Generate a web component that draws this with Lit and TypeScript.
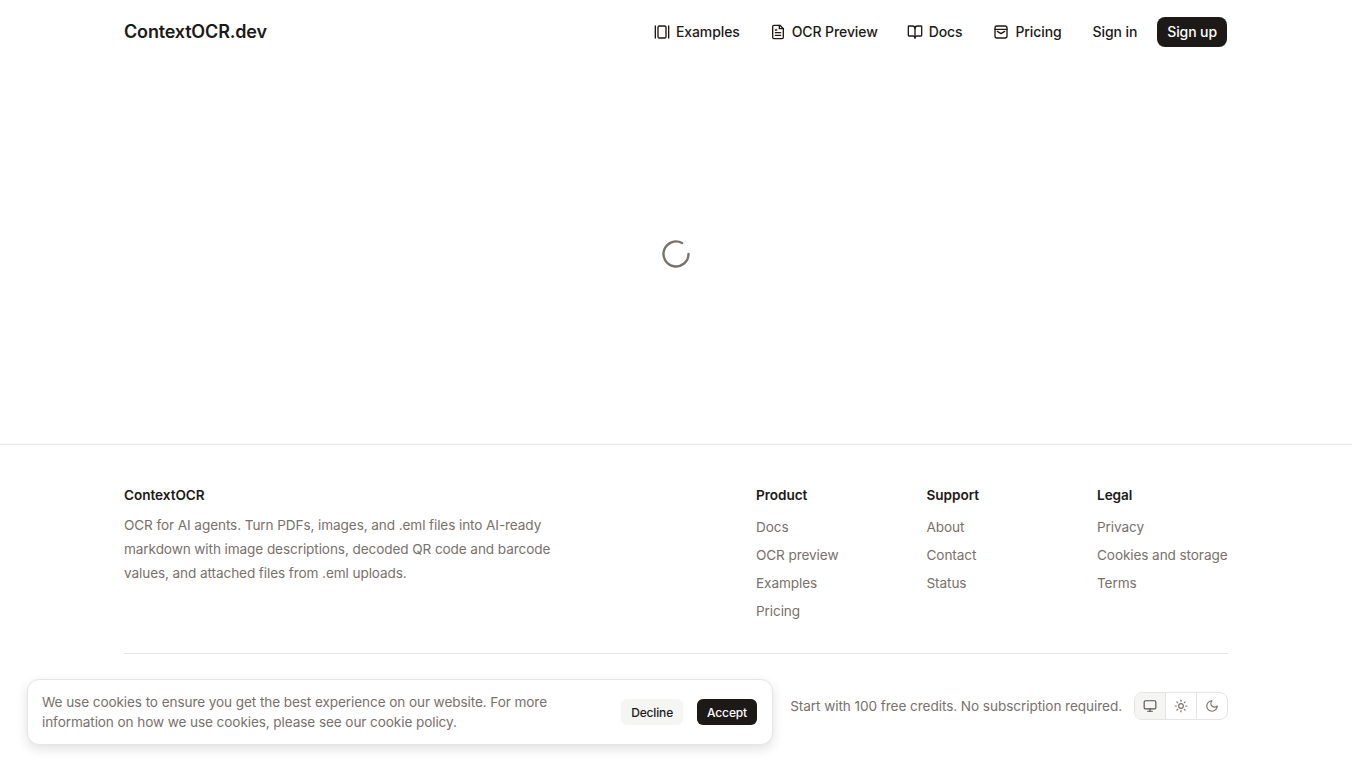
import { LitElement, css, html, svg as s } from 'lit';
import { customElement } from 'lit/decorators.js';

const svg = (body: unknown, size = 16) => html`<svg
  width=${size}
  height=${size}
  viewBox="0 0 24 24"
  fill="none"
  stroke="currentColor"
  stroke-width="2"
  stroke-linecap="round"
  stroke-linejoin="round"
>
  ${body}
</svg>`;

const icons = {
  examples: s`<rect x="6" y="3" width="12" height="18" rx="2"/><path d="M2 3v18"/><path d="M22 3v18"/>`,
  file: s`<path d="M15 2H6a2 2 0 0 0-2 2v16a2 2 0 0 0 2 2h12a2 2 0 0 0 2-2V7z"/><path d="M14 2v5h6"/><path d="M10 9H8"/><path d="M16 13H8"/><path d="M16 17H8"/>`,
  book: s`<path d="M12 7v14"/><path d="M3 18a1 1 0 0 1-1-1V4a1 1 0 0 1 1-1h5a4 4 0 0 1 4 4 4 4 0 0 1 4-4h5a1 1 0 0 1 1 1v13a1 1 0 0 1-1 1h-6a3 3 0 0 0-3 3 3 3 0 0 0-3-3z"/>`,
  pricing: s`<rect x="3" y="3" width="18" height="18" rx="3"/><path d="M3 8h18"/><path d="M6.5 11l5.5 3.5 5.5-3.5"/>`,
  monitor: s`<rect x="2" y="3" width="20" height="14" rx="2"/><path d="M8 21h8"/><path d="M12 17v4"/>`,
  sun: s`<circle cx="12" cy="12" r="4"/><path d="M12 2v2"/><path d="M12 20v2"/><path d="m4.93 4.93 1.41 1.41"/><path d="m17.66 17.66 1.41 1.41"/><path d="M2 12h2"/><path d="M20 12h2"/><path d="m6.34 17.66-1.41 1.41"/><path d="m19.07 4.93-1.41 1.41"/>`,
  moon: s`<path d="M12 3a6 6 0 0 0 9 9 9 9 0 1 1-9-9Z"/>`,
};

const nav = [
  { label: 'Examples', icon: icons.examples },
  { label: 'OCR Preview', icon: icons.file },
  { label: 'Docs', icon: icons.book },
  { label: 'Pricing', icon: icons.pricing },
];

const columns = [
  { title: 'Product', links: ['Docs', 'OCR preview', 'Examples', 'Pricing'] },
  { title: 'Support', links: ['About', 'Contact', 'Status'] },
  { title: 'Legal', links: ['Privacy', 'Cookies and storage', 'Terms'] },
];

@customElement('app-root')
export class AppRoot extends LitElement {
  static styles = css`
    :host {
      display: block;
      font-family: Inter, 'Liberation Sans', sans-serif;
      color: #1c1917;
      background: #fff;
      height: 760px;
      overflow: hidden;
      position: relative;
    }
    .container {
      max-width: 1104px;
      margin: 0 auto;
    }
    header .container {
      height: 64px;
      display: flex;
      align-items: center;
      justify-content: space-between;
    }
    .brand {
      font-size: 18px;
      font-weight: 600;
      letter-spacing: -0.17px;
      margin-bottom: 2px;
    }
    nav {
      display: flex;
      align-items: center;
      padding-right: 1px;
    }
    nav a {
      display: flex;
      align-items: center;
      gap: 6px;
      font-size: 14px;
      font-weight: 500;
      letter-spacing: -0.1px;
      height: 30px;
      padding: 0 10px;
      margin-left: 10px;
    }
    nav a span {
      margin-bottom: 2px;
    }
    nav a:nth-child(3) {
      margin-left: 9px;
    }
    nav a:nth-child(4) {
      margin-left: 11px;
    }
    nav a.plain {
      margin-left: 11px;
    }
    nav a.signup {
      background: #1c1917;
      color: #fff;
      border-radius: 8px;
      margin-left: 10px;
    }
    main {
      height: 380px;
      display: flex;
      justify-content: center;
      padding-top: 176px;
      box-sizing: border-box;
    }
    .spinner {
      width: 28px;
      height: 28px;
      color: #78716c;
    }
    footer {
      border-top: 1px solid #e7e5e4;
    }
    .top {
      display: flex;
      justify-content: space-between;
      padding: 40px 0 32px;
      border-bottom: 1px solid #e7e5e4;
    }
    .about {
      width: 448px;
    }
    h3 {
      margin: 0;
      font-size: 13.6px;
      line-height: 20px;
      font-weight: 600;
      letter-spacing: -0.05px;
    }
    .about p {
      margin: 8px 0 0;
      font-size: 13.6px;
      letter-spacing: -0.1px;
      line-height: 24px;
      color: #78716c;
    }
    .cols {
      display: grid;
      grid-template-columns: 170.5px 170.5px 131px;
    }
    ul {
      list-style: none;
      margin: 12px 0 0;
      padding: 0;
      display: flex;
      flex-direction: column;
      gap: 8px;
    }
    li {
      font-size: 13.6px;
      letter-spacing: -0.1px;
      line-height: 20px;
      color: #78716c;
      white-space: nowrap;
    }
    .bottom {
      display: flex;
      justify-content: flex-end;
      align-items: center;
      gap: 12px;
      padding-top: 38px;
    }
    .bottom span {
      font-size: 13.6px;
      letter-spacing: -0.07px;
      color: #78716c;
    }
    .themes {
      display: flex;
      border: 1px solid #e7e5e4;
      border-radius: 8px;
      overflow: hidden;
    }
    .themes div {
      width: 30px;
      height: 26px;
      display: flex;
      align-items: center;
      justify-content: center;
      color: #78716c;
    }
    .themes div + div {
      border-left: 1px solid #e7e5e4;
    }
    .themes div.on {
      background: #f5f5f4;
      color: #57534e;
    }
    .cookie {
      position: absolute;
      left: 27px;
      top: 679px;
      width: 746px;
      height: 66px;
      box-sizing: border-box;
      background: #fff;
      border: 1px solid #e7e5e4;
      border-radius: 12px;
      box-shadow: 0 4px 12px rgba(0, 0, 0, 0.12);
      display: flex;
      align-items: center;
      justify-content: space-between;
      padding: 0 15px 0 14px;
    }
    .cookie p {
      margin: 0;
      font-size: 13.6px;
      letter-spacing: -0.1px;
      line-height: 20px;
      color: #78716c;
      width: 530px;
    }
    .actions {
      display: flex;
      gap: 14px;
    }
    button {
      font: inherit;
      font-size: 12px;
      font-weight: 500;
      letter-spacing: -0.15px;
      border: 0;
      height: 26px;
      padding: 0 10px;
      border-radius: 6px;
    }
    .decline {
      background: #f5f5f4;
      color: #1c1917;
    }
    .accept {
      background: #1c1917;
      color: #fff;
    }
  `;

  render() {
    return html`
      <header>
        <div class="container">
          <div class="brand">ContextOCR.dev</div>
          <nav>
            ${nav.map((n) => html`<a>${svg(n.icon)}<span>${n.label}</span></a>`)}
            <a class="plain"><span>Sign in</span></a>
            <a class="signup"><span>Sign up</span></a>
          </nav>
        </div>
      </header>
      <main>
        <svg class="spinner" viewBox="0 0 28 28" fill="none">
          <path
            d="M26.5 14A12.5 12.5 0 1 1 20 3"
            stroke="currentColor"
            stroke-width="2.4"
            stroke-linecap="round"
          />
        </svg>
      </main>
      <footer>
        <div class="container">
          <div class="top">
            <div class="about">
              <h3>ContextOCR</h3>
              <p>
                OCR for AI agents. Turn PDFs, images, and .eml files into
                AI-ready markdown with image descriptions, decoded QR code and
                barcode values, and attached files from .eml uploads.
              </p>
            </div>
            <div class="cols">
              ${columns.map(
                (c) => html`<div>
                  <h3>${c.title}</h3>
                  <ul>
                    ${c.links.map((l) => html`<li>${l}</li>`)}
                  </ul>
                </div>`,
              )}
            </div>
          </div>
          <div class="bottom">
            <span>Start with 100 free credits. No subscription required.</span>
            <div class="themes">
              <div class="on">${svg(icons.monitor, 14)}</div>
              <div>${svg(icons.sun, 14)}</div>
              <div>${svg(icons.moon, 14)}</div>
            </div>
          </div>
        </div>
      </footer>
      <div class="cookie">
        <p>
          We use cookies to ensure you get the best experience on our website.
          For more information on how we use cookies, please see our cookie
          policy.
        </p>
        <div class="actions">
          <button class="decline">Decline</button>
          <button class="accept">Accept</button>
        </div>
      </div>
    `;
  }
}
